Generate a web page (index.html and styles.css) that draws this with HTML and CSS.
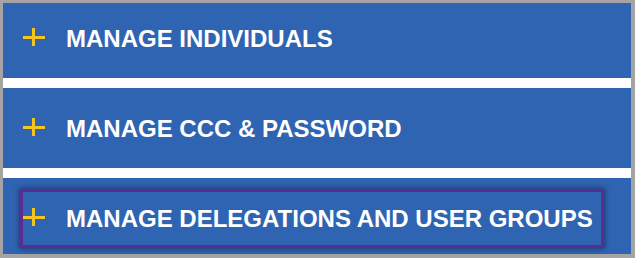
FILE: index.html
```html
<!DOCTYPE html>
<html>
<head>
<meta charset="utf-8">
<link rel="stylesheet" href="styles.css">
</head>
<body>
<div class="frame">
  <div class="band band-first">
    <div class="row">
      <svg class="plus" width="22" height="18" viewBox="0 0 22 18"><path d="M0 9.5H22M10.5 0V18" stroke="#f5c41e" stroke-width="3" fill="none"/></svg>
      <span class="label">MANAGE INDIVIDUALS</span>
    </div>
  </div>
  <div class="band band-second">
    <div class="row">
      <svg class="plus" width="22" height="18" viewBox="0 0 22 18"><path d="M0 9.5H22M10.5 0V18" stroke="#f5c41e" stroke-width="3" fill="none"/></svg>
      <span class="label">MANAGE CCC &amp; PASSWORD</span>
    </div>
  </div>
  <div class="band band-third">
    <div class="row focused">
      <svg class="plus" width="22" height="18" viewBox="0 0 22 18"><path d="M0 9.5H22M10.5 0V18" stroke="#f5c41e" stroke-width="3" fill="none"/></svg>
      <span class="label">MANAGE DELEGATIONS AND USER GROUPS</span>
    </div>
  </div>
</div>
</body>
</html>
```
FILE: styles.css
```css
html, body {
  margin: 0;
  padding: 0;
}
body {
  width: 635px;
  height: 258px;
  overflow: hidden;
  font-family: "Liberation Sans", Arial, sans-serif;
}
.frame {
  box-sizing: border-box;
  width: 635px;
  height: 258px;
  border-style: solid;
  border-color: #a4a4a4;
  border-width: 3px 4px 4px 3px;
  background: #ffffff;
  display: flex;
  flex-direction: column;
  gap: 10px;
}
.band {
  box-sizing: border-box;
  background: #2f64b2;
  padding-left: 20px;
}
.band-first {
  height: 75px;
  padding-top: 22px;
}
.band-second {
  height: 80px;
  padding-top: 27px;
}
.band-third {
  height: 76px;
  padding: 11px 27px 6px 17px;
}
.row {
  display: flex;
  align-items: center;
  height: 28px;
}
.focused {
  box-sizing: border-box;
  height: 59px;
  border: 3px solid #5a2c8f;
  box-shadow: 0 0 5px 1px rgba(20, 20, 60, 0.55);
  padding-top: 1px;
}
.plus {
  flex: none;
  margin-right: 21px;
  margin-bottom: 5px;
}
.label {
  color: #ffffff;
  font-weight: bold;
  font-size: 24px;
  line-height: 28px;
  white-space: nowrap;
}
```
